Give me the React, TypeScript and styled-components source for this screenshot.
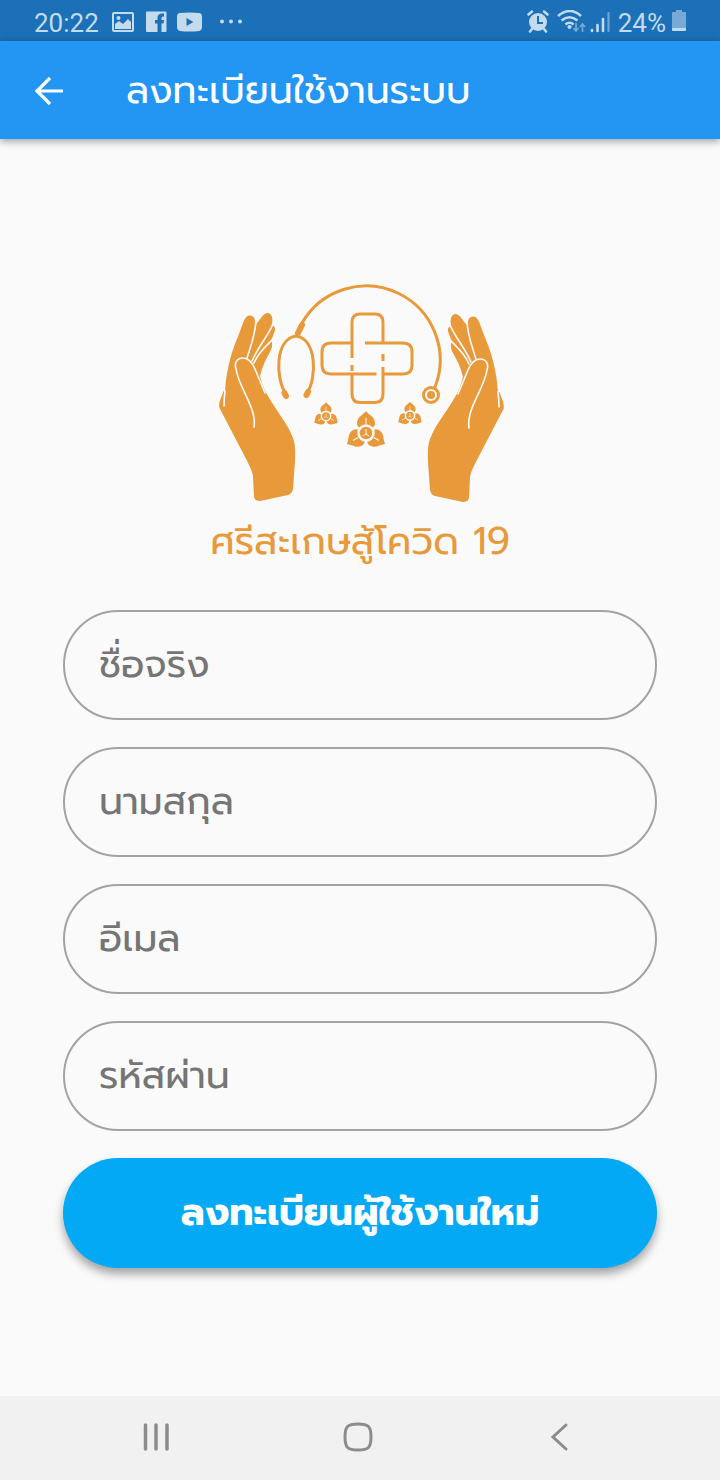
import React from 'react';
import styled, { createGlobalStyle } from 'styled-components';

const thai = '"Prompt", "Noto Sans Thai", "Noto Sans", "Liberation Sans", sans-serif';
const orange = '#e8993a';
const surface = '#fafafa';

const GlobalStyle = createGlobalStyle`
  *, *::before, *::after { box-sizing: border-box; }
  body { margin: 0; background: ${surface}; font-family: ${thai}; }
`;

const Screen = styled.div`
  min-height: 100vh;
  display: flex;
  flex-direction: column;
  background: ${surface};
`;

const StatusBar = styled.div`
  height: 41px;
  padding: 4px 34px 0 34px;
  display: flex;
  align-items: center;
  justify-content: space-between;
  background: #1b70b7;
  color: #c4dbee;
  font-family: Roboto, "Liberation Sans", sans-serif;
  font-size: 26px;
  line-height: 36px;
`;

const StatusGroup = styled.div<{ $gap: number }>`
  display: flex;
  align-items: center;
  gap: ${({ $gap }) => $gap}px;
`;

const AppBar = styled.header`
  height: 98px;
  padding: 2px 32px 0;
  display: flex;
  align-items: center;
  gap: 60px;
  background: #2396f3;
  color: #fff;
  box-shadow: 0 2px 8px rgba(0, 0, 0, 0.4);
`;

const IconButton = styled.button`
  display: flex;
  padding: 0;
  border: 0;
  background: none;
  color: inherit;
  cursor: pointer;
`;

const Title = styled.h1`
  margin: 0;
  font-size: 38px;
  font-weight: 400;
  line-height: 48px;
  white-space: nowrap;
`;

const Main = styled.main`
  flex: 1;
  padding: 136px 63px 60px;
  display: flex;
  flex-direction: column;
  align-items: center;
`;

const Brand = styled.figure`
  margin: 0 0 36px;
  display: flex;
  flex-direction: column;
  align-items: center;
`;

const BrandName = styled.figcaption`
  color: ${orange};
  font-size: 38px;
  line-height: 64px;
  white-space: nowrap;
`;

const Form = styled.form`
  width: 100%;
  display: flex;
  flex-direction: column;
  gap: 27px;
`;

const Field = styled.input`
  width: 100%;
  height: 110px;
  padding: 0 34px 2px;
  border: 2px solid #a3a3a3;
  border-radius: 55px;
  background: transparent;
  color: #222;
  font-family: ${thai};
  font-size: 38px;
  outline: none;
  &::placeholder { color: #757575; opacity: 1; }
`;

const SubmitButton = styled.button`
  height: 110px;
  padding: 0 0 2px;
  border: 0;
  border-radius: 55px;
  background: #04a9f5;
  color: #fff;
  font-family: ${thai};
  font-size: 38px;
  font-weight: 700;
  box-shadow: 0 6px 10px rgba(0, 0, 0, 0.35);
  cursor: pointer;
`;

const NavBar = styled.nav`
  height: 84px;
  padding: 0 143px 2px 138px;
  display: flex;
  align-items: center;
  justify-content: space-between;
  background: #f1f1f1;
  color: #8c8c8c;
`;

const Hand = () => (
  <g>
    <path fill={orange} d="M225 392C226 370 232 350 239 334C243 323 245 315 250 315.500C256 316 255 322 255 326L257 323C260 320 263 313 268 313C273 314 273 321 271.500 326C275 325 276 329 274 333L271 341C273 343 272 349 270 352C266 359 262 367 260 376C262 384 264 389 268 396C275 409 288 424 293 438C296 446 295 455 295 461L293 489Q292 494 288 495L260 501Q255 501 254 497L253 476C252 470 248 463 244 455L219.500 408C218 402 222 397 223.500 391Z" />
    <g fill="none" stroke={surface} strokeWidth="1.600" strokeLinecap="round">
      <path d="M265 393L255 369C252 362 248 358 243 358C237 358 234 363 236 369C238 382 247 396 251 407C254 415 255 421 254 427" />
      <path d="M256 319C256 333 251 345 247 358" />
      <path d="M273 324C268 336 258 347 252 361" />
      <path d="M272 340C265 347 258 353 254 363" />
      <path d="M225 391Q224 399 224 406" />
    </g>
  </g>
);

const Flower = ({ x, y, scale }: { x: number; y: number; scale: number }) => (
  <g transform={`translate(${x} ${y}) scale(${scale})`}>
    {[0, 120, 240].map((angle) => (
      <g key={angle} transform={`rotate(${angle})`}>
        <path fill={orange} d="M0-22C3-18 9-16 9-10C9-6 6-4 3-5H-3C-6-4-9-6-9-10C-9-16-3-18 0-22Z" />
        <path stroke={surface} strokeWidth="1" d="M0-15V-9" />
      </g>
    ))}
    <circle r="7.500" fill={orange} stroke={surface} strokeWidth="2.500" />
    <path fill="none" stroke={surface} strokeWidth="1" d="M0-4V1M-3 3L0 1L3 3" />
  </g>
);

const Emblem = () => (
  <svg width="300" height="235" viewBox="210 275 300 235" role="img" aria-label="โลโก้ศรีสะเกษสู้โควิด 19">
    <Hand />
    <g transform="translate(723 1) scale(-1 1)"><Hand /></g>
    <g fill="none" stroke={orange} strokeWidth="3" strokeLinecap="round">
      <path d="M302 323A74 74 0 0 1 435 387" />
      <path d="M286 394C275 378 275 339 296 336C317 339 317 378 307 393" />
      <path strokeWidth="6" d="M302 325L298 333M284.500 393L286 396M308 392L306.500 395" />
      <circle cx="431" cy="395" r="7.500" />
      <path strokeLinecap="butt" d="M352 358V322Q352 314 360 314H375Q383 314 383 322V342M352 343H331Q322 343 322 352V365Q322 374 331 374H376.500M352 365V371M352 374V394Q352 402.500 360 402.500H375Q383 402.500 383 394V367M365 343H403Q412 343 412 352V365Q412 374 403 374H383M383 354V361" />
    </g>
    <circle cx="431" cy="395" r="4" fill={orange} />
    <Flower x={366} y={433} scale={1} />
    <Flower x={326} y={416} scale={0.62} />
    <Flower x={410} y={415.5} scale={0.62} />
  </svg>
);

const NotificationIcons = () => (
  <svg width="132" height="26" viewBox="0 0 132 26" fill="currentColor" aria-hidden="true">
    <path fillRule="evenodd" d="M2 2H20Q22 2 22 4V20Q22 22 20 22H2Q0 22 0 20V4Q0 2 2 2ZM2 4V20H20V4Z" />
    <path d="M3 19V14L7 11L11 14L16 9L19 12V19Z" />
    <circle cx="6.500" cy="8" r="2" />
    <path d="M35 1.500H53.500Q54.500 1.500 54.500 2.500V21Q54.500 22 53.500 22H49.500V13.500H51.500L52 10H49.500V8Q49.500 6.500 51 6.500H52V3.500H50Q45.500 3.500 45.500 8V10H43V13.500H45.500V22H35Q34 22 34 21V2.500Q34 1.500 35 1.500Z" />
    <path fillRule="evenodd" d="M68 3Q77 2 87 3Q90 3 90 7V17Q90 20 87 21Q77 22 68 21Q65 20 65 17V7Q65 3 68 3ZM74.500 8V16L81.500 12Z" />
    <circle cx="110" cy="11.500" r="2" /><circle cx="119" cy="11.500" r="2" /><circle cx="128" cy="11.500" r="2" />
  </svg>
);

const SignalIcons = () => (
  <svg width="85" height="26" viewBox="0 0 85 26" fill="none" stroke="currentColor" aria-hidden="true">
    <circle cx="11" cy="12" r="9" fill="currentColor" stroke="none" />
    <path strokeWidth="2.500" strokeLinecap="round" d="M1.500 4.500L5 1.500M20.500 4.500L17 1.500M5 19L3 21.500M17 19L19 21.500" />
    <path stroke="#1b70b7" strokeWidth="2" d="M11 6V13H16" />
    <g strokeWidth="2.600">
      <path d="M31 6Q43-4 54 6M34.500 10.500Q42.500 4 50.500 10.500M38.500 14.500Q42.500 11 46.500 14.500" />
      <circle cx="42.500" cy="17" r="2" fill="currentColor" stroke="none" />
    </g>
    <path opacity=".5" strokeWidth="1.800" d="M49 13V21M46.500 18L49 21L51.500 18M55.500 22V14M53 17L55.500 14L58 17" />
    <path strokeWidth="2.600" strokeLinecap="round" d="M65 21V20M70.500 21V15M76 21V9" />
    <path opacity=".5" strokeWidth="2.200" strokeLinecap="round" d="M81.500 21V3" />
  </svg>
);

const BatteryIcon = () => (
  <svg width="14" height="26" viewBox="0 0 14 26" fill="currentColor" aria-hidden="true">
    <path opacity=".55" d="M4 0H10V2H13Q14 2 14 3V18H0V3Q0 2 1 2H4Z" />
    <path d="M0 18H14V20Q14 21 13 21H1Q0 21 0 20Z" />
  </svg>
);

const fields = [
  { name: 'firstName', label: 'ชื่อจริง', type: 'text' },
  { name: 'lastName', label: 'นามสกุล', type: 'text' },
  { name: 'email', label: 'อีเมล', type: 'email' },
  { name: 'password', label: 'รหัสผ่าน', type: 'password' },
];

export default function App() {
  return (
    <Screen lang="th">
      <GlobalStyle />
      <StatusBar>
        <StatusGroup $gap={13}>
          <span>20:22</span>
          <NotificationIcons />
        </StatusGroup>
        <StatusGroup $gap={6}>
          <SignalIcons />
          <span>24%</span>
          <BatteryIcon />
        </StatusGroup>
      </StatusBar>
      <AppBar>
        <IconButton type="button" aria-label="ย้อนกลับ">
          <svg width="34" height="34" viewBox="0 0 34 34" fill="none" stroke="currentColor" strokeWidth="3.200">
            <path d="M31 17H5M18 4L5 17L18 30" />
          </svg>
        </IconButton>
        <Title>ลงทะเบียนใช้งานระบบ</Title>
      </AppBar>
      <Main>
        <Brand>
          <Emblem />
          <BrandName>ศรีสะเกษสู้โควิด 19</BrandName>
        </Brand>
        <Form onSubmit={(event) => event.preventDefault()}>
          {fields.map(({ name, label, type }) => (
            <Field key={name} name={name} type={type} placeholder={label} aria-label={label} />
          ))}
          <SubmitButton type="submit">ลงทะเบียนผู้ใช้งานใหม่</SubmitButton>
        </Form>
      </Main>
      <NavBar aria-label="การนำทาง">
        <IconButton type="button" aria-label="แอปล่าสุด">
          <svg width="36" height="36" viewBox="0 0 36 36" stroke="currentColor" strokeWidth="3.500" strokeLinecap="round">
            <path d="M7.500 6V30M18 6V30M29 6V30" />
          </svg>
        </IconButton>
        <IconButton type="button" aria-label="หน้าหลัก">
          <svg width="36" height="36" viewBox="0 0 36 36" fill="none" stroke="currentColor" strokeWidth="3">
            <path d="M18 5C28.500 5 31 7.500 31 18S28.500 31 18 31S5 28.500 5 18S7.500 5 18 5Z" />
          </svg>
        </IconButton>
        <IconButton type="button" aria-label="กลับ">
          <svg width="36" height="36" viewBox="0 0 36 36" fill="none" stroke="currentColor" strokeWidth="3" strokeLinecap="round">
            <path d="M25 6L12 18L25 30" />
          </svg>
        </IconButton>
      </NavBar>
    </Screen>
  );
}
